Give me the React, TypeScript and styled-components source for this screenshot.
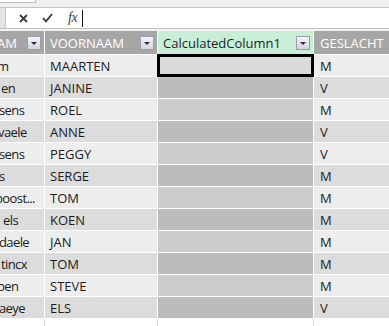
import React from 'react';
import styled, { createGlobalStyle } from 'styled-components';

const GlobalStyle = createGlobalStyle`
  html, body {
    margin: 0;
    padding: 0;
    background: #ffffff;
  }
  body {
    font-family: 'Open Sans', 'Liberation Sans', sans-serif;
  }
`;

type Row = {
  last: string;
  shift: number;
  first: string;
  gender: string;
};

const rows: Row[] = [
  { last: 'm', shift: -3, first: 'MAARTEN', gender: 'M' },
  { last: 'en', shift: 1, first: 'JANINE', gender: 'V' },
  { last: 'sens', shift: -1, first: 'ROEL', gender: 'M' },
  { last: 'vaele', shift: -2, first: 'ANNE', gender: 'V' },
  { last: 'sens', shift: -1, first: 'PEGGY', gender: 'V' },
  { last: 's', shift: -1, first: 'SERGE', gender: 'M' },
  { last: 'boost...', shift: -5, first: 'TOM', gender: 'M' },
  { last: 'els', shift: 3, first: 'KOEN', gender: 'M' },
  { last: 'daele', shift: -1, first: 'JAN', gender: 'M' },
  { last: 'tincx', shift: 1, first: 'TOM', gender: 'M' },
  { last: 'ben', shift: -3, first: 'STEVE', gender: 'M' },
  { last: 'aeye', shift: -1, first: 'ELS', gender: 'V' }
];

export default function App() {
  return (
    <Page>
      <GlobalStyle />
      <TopStrip>
        <NameBoxEdge />
      </TopStrip>
      <FormulaBar>
        <Gutter />
        <FormulaButtons>
          <svg width="9" height="9" viewBox="0 0 9 9">
            <path d="M1 1 L8 8 M8 1 L1 8" stroke="#3c3c3c" strokeWidth="1.8" />
          </svg>
          <svg width="11" height="10" viewBox="0 0 11 10">
            <path
              d="M1 5.2 L4 8.4 L10 1"
              stroke="#3c3c3c"
              strokeWidth="1.9"
              fill="none"
            />
          </svg>
          <Fx>fx</Fx>
        </FormulaButtons>
        <FormulaInput />
      </FormulaBar>
      <Spacer />
      <Sheet>
        <HeaderCell>
          <HeaderLabel $shift={-3}>AM</HeaderLabel>
          <FilterButton />
        </HeaderCell>
        <HeaderCell>
          <HeaderLabel $shift={5}>VOORNAAM</HeaderLabel>
          <FilterButton />
        </HeaderCell>
        <HeaderCell $calc>
          <HeaderLabel $shift={5} $calc>
            CalculatedColumn1
          </HeaderLabel>
          <FilterButton />
        </HeaderCell>
        <HeaderCell>
          <HeaderLabel $shift={6}>GESLACHT</HeaderLabel>
        </HeaderCell>

        {rows.map((row, i) => {
          const even = i % 2 === 1;
          return (
            <React.Fragment key={i}>
              <Cell $even={even} $pad={0}>
                <Clipped style={{ marginLeft: row.shift }}>{row.last}</Clipped>
              </Cell>
              <Cell $even={even}>{row.first}</Cell>
              <CalcCell $even={even} $active={i === 0} />
              <Cell $even={even} $pad={6}>
                {row.gender}
              </Cell>
            </React.Fragment>
          );
        })}

        <EmptyCell />
        <EmptyCell />
        <EmptyCell />
        <EmptyCell $last />
      </Sheet>
    </Page>
  );
}

const Page = styled.div`
  width: 389px;
  height: 326px;
  overflow: hidden;
  background: #ffffff;
`;

const TopStrip = styled.div`
  height: 7px;
  background: #efefef;
  border-bottom: 1px solid #c4c4c4;
`;

const NameBoxEdge = styled.div`
  width: 35px;
  height: 2px;
  background: #ffffff;
  border-right: 1px solid #bdbdbd;
  border-bottom: 1px solid #bdbdbd;
`;

const FormulaBar = styled.div`
  display: flex;
  height: 20px;
  background: #ffffff;
  border-bottom: 1px solid #c2c2c2;
`;

const Gutter = styled.div`
  width: 5px;
  background: #e4e4e4;
  border-right: 1px solid #c8c8c8;
`;

const FormulaButtons = styled.div`
  width: 76px;
  display: flex;
  align-items: center;
  padding-left: 13px;
  gap: 14px;
  box-sizing: border-box;
`;

const Fx = styled.span`
  font-family: 'Liberation Serif', serif;
  font-style: italic;
  font-size: 14px;
  color: #404040;
  letter-spacing: -0.5px;
  line-height: 1;
  margin-left: 1px;
`;

const FormulaInput = styled.div`
  flex: 1;
  margin: 2px 0 1px;
  border-left: 1px solid #1a1a1a;
`;

const Spacer = styled.div`
  height: 2px;
  background: #f2f2f2;
`;

const Sheet = styled.div`
  display: grid;
  grid-template-columns: 44px 112px 155px 1fr;
  grid-template-rows: 23px repeat(12, 21px) 12px;
  column-gap: 1px;
  row-gap: 1px;
  background: #ffffff;
  font-size: 13px;
  color: #1b1b1b;
`;

const HeaderCell = styled.div<{ $calc?: boolean }>`
  display: flex;
  align-items: center;
  justify-content: space-between;
  background: ${(p) => (p.$calc ? '#c8eed8' : '#a6a6a6')};
  padding-right: 3px;
  overflow: hidden;
`;

const HeaderLabel = styled.span<{ $calc?: boolean; $shift: number }>`
  color: ${(p) => (p.$calc ? '#1e1e1e' : '#ffffff')};
  margin-left: ${(p) => p.$shift}px;
  white-space: nowrap;
`;

const FilterButton = styled.div`
  position: relative;
  flex: none;
  width: 12px;
  height: 12px;
  border: 1px solid #9c9cac;
  background: linear-gradient(#f4f4f8, #d4d4dc);

  &::after {
    content: '';
    position: absolute;
    left: 3px;
    top: 5px;
    border-left: 3px solid transparent;
    border-right: 3px solid transparent;
    border-top: 3px solid #2c2c48;
  }
`;

const Cell = styled.div<{ $even: boolean; $pad?: number }>`
  display: flex;
  align-items: center;
  padding-left: ${(p) => p.$pad ?? 5}px;
  background: ${(p) => (p.$even ? '#dcdcdc' : '#ededed')};
  white-space: nowrap;
  overflow: hidden;
`;

const Clipped = styled.span`
  display: block;
  letter-spacing: -0.6px;
`;

const CalcCell = styled.div<{ $even: boolean; $active?: boolean }>`
  background: ${(p) =>
    p.$active ? '#dadada' : p.$even ? '#bcbcbc' : '#cdcdcd'};
  ${(p) =>
    p.$active
      ? 'box-shadow: 0 0 0 1px #000, inset 0 0 0 2px #000; position: relative; z-index: 1;'
      : ''}
`;

const EmptyCell = styled.div<{ $last?: boolean }>`
  background: #ffffff;
  ${(p) => (p.$last ? '' : 'border-right: 1px solid #dadada; margin-right: -1px;')}
`;
